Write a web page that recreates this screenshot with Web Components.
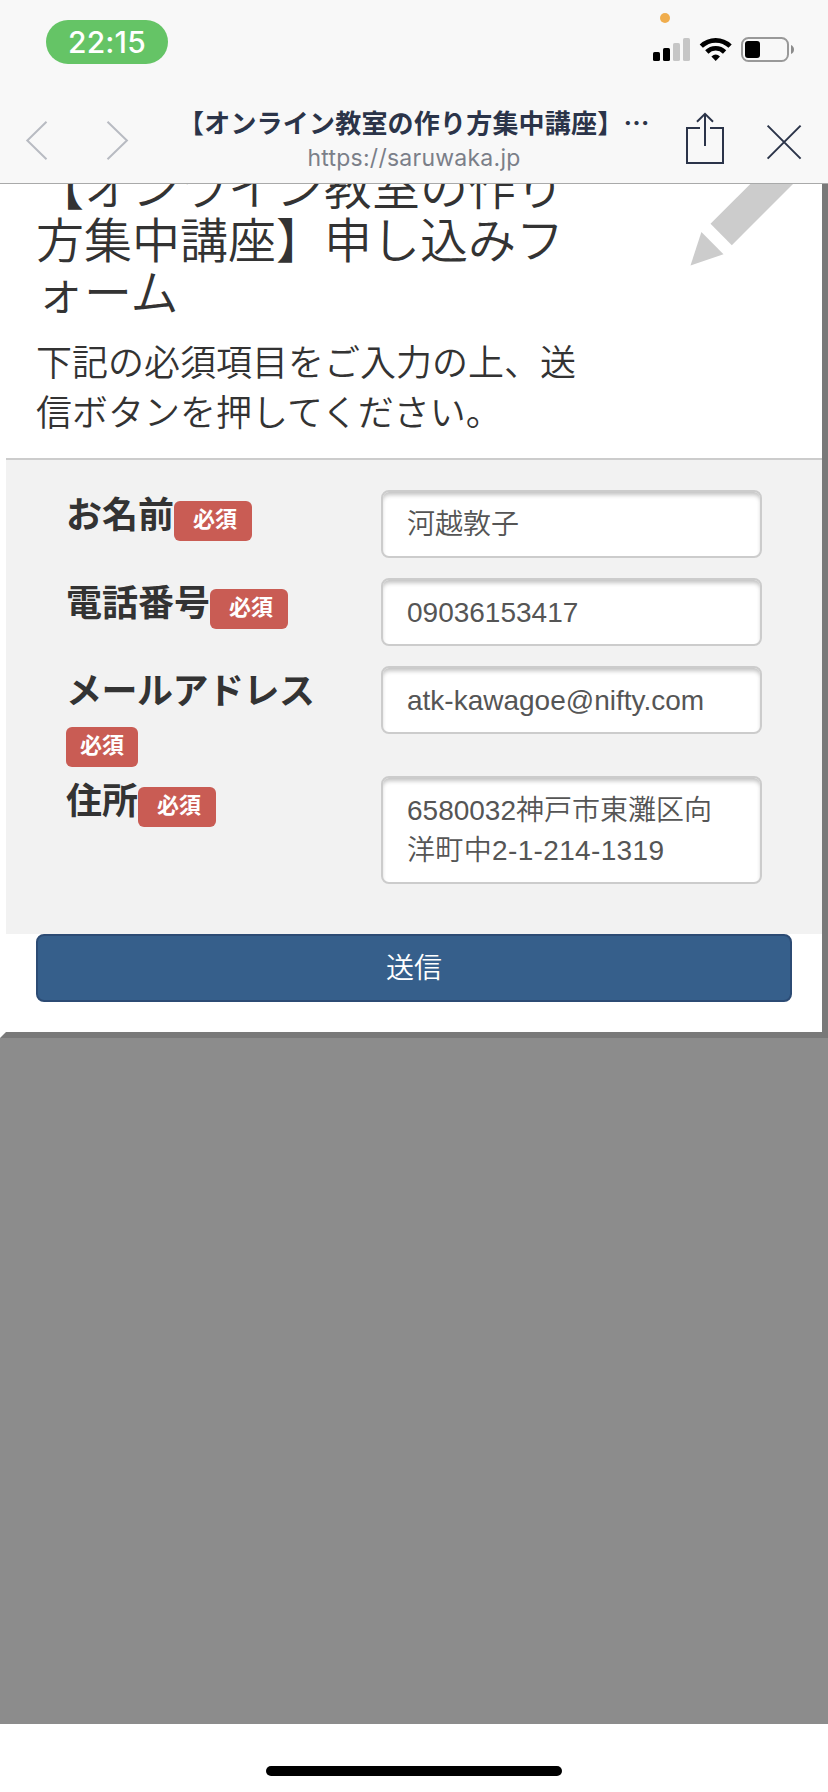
<!DOCTYPE html>
<html lang="ja">
<head>
<meta charset="utf-8">
<title>【オンライン教室の作り方集中講座】</title>
<style>
body {
    margin: 0;
    width: 828px;
    height: 1792px;
    overflow: hidden;
    background: #fff;
    font-family: "Liberation Sans", "Noto Sans CJK JP", sans-serif;
}
</style>
</head>
<body>
<form-screen></form-screen>

<script>
const define = (name, html, render) => {
    const template = document.createElement('template');
    template.innerHTML = html;

    customElements.define(name, class extends HTMLElement {
        constructor() {
            super();
            this.attachShadow({ mode: 'open' });
            this.shadowRoot.appendChild(template.content.cloneNode(true));
        }

        connectedCallback() {
            if (render) {
                render(this, this.shadowRoot);
            }
        }
    });
};

define('status-bar', `
<style>
:host {
    display: flex;
    justify-content: space-between;
    align-items: flex-start;
    height: 84px;
    padding-left: 46px;
    padding-right: 33px;
    box-sizing: border-box;
}
.time {
    margin-top: 20px;
    width: 122px;
    height: 44px;
    line-height: 45px;
    border-radius: 22px;
    background: #65c466;
    color: #fff;
    text-align: center;
    font-family: Inter, sans-serif;
    font-size: 30px;
    font-weight: 450;
    letter-spacing: 0.2px;
}
svg { display: block; }
</style>
<div class="time">22:15</div>
<svg width="143" height="70" viewBox="652 0 143 70">
    <circle cx="665" cy="18" r="5" fill="#f0ad4d"/>
    <rect x="653" y="52" width="7" height="9" rx="1.6"/>
    <rect x="663" y="48" width="7" height="13" rx="1.6"/>
    <rect x="673" y="43" width="7" height="18" rx="1.6" fill="#c6c6c6"/>
    <rect x="683" y="38" width="7" height="23" rx="1.6" fill="#c6c6c6"/>
    <g fill="none" stroke="#000" stroke-width="4.6">
        <path d="M701.3 46.2 A20.6 20.6 0 0 1 730.1 46.2"/>
        <path d="M706.8 52 A12.6 12.6 0 0 1 724.6 52"/>
    </g>
    <path d="M711.4 56.6 Q715.7 52.6 720 56.6 L715.7 61 Z"/>
    <rect x="742" y="38" width="46" height="23" rx="6.5" fill="none" stroke="#999" stroke-width="2"/>
    <rect x="745" y="41" width="15" height="17" rx="3"/>
    <path d="M791 45 Q794 46.5 794 49.5 T791 54 Z" fill="#8c8c8c"/>
</svg>
`);

define('nav-bar', `
<style>
:host {
    display: flex;
    align-items: flex-start;
    height: 99px;
    color: #2b3449;
}
svg {
    display: block;
    flex: none;
    fill: none;
    stroke: currentColor;
    stroke-width: 2;
}
.arrows { color: #b8bbc2; }
.titles {
    width: 488px;
    flex: none;
    text-align: center;
    white-space: nowrap;
    padding-top: 19px;
}
.title {
    font-size: 26px;
    line-height: 38px;
    font-weight: 700;
    font-family: "Noto Sans CJK JP", sans-serif;
    display: flex;
    padding-left: 8px;
    letter-spacing: 0.2px;
}
.url {
    margin-top: 2px;
    font-family: Inter, sans-serif;
    font-size: 23px;
    line-height: 30px;
    color: #7b7f89;
    letter-spacing: 0.25px;
}
</style>
<svg class="arrows" width="170" height="99" viewBox="0 84 170 99">
    <path d="M46.5 121.8 L27.3 140.5 L46.5 159.2"/>
    <path d="M107.5 121.8 L126.9 140.5 L107.5 159.2"/>
</svg>
<div class="titles">
    <div class="title"><slot name="title"></slot></div>
    <div class="url"><slot name="url"></slot></div>
</div>
<svg width="170" height="99" viewBox="658 84 170 99">
    <path d="M700 128 H687 V163 H723 V128 H710 M705 146 V114 M697 121.8 L705 113.8 L713 121.8"/>
    <path d="M767.6 125.6 L800.6 158.6 M800.6 125.6 L767.6 158.6"/>
</svg>
`);

define('form-heading', `
<style>
:host {
    display: flex;
    justify-content: space-between;
    height: 274px;
    padding-left: 30px;
    box-sizing: border-box;
    overflow: hidden;
    color: #333;
    font-family: "Noto Sans CJK JP", sans-serif;
    font-weight: 350;
}
.text {
    width: 545px;
    display: flex;
    flex-direction: column;
    justify-content: flex-end;
    gap: 18.5px;
    padding-bottom: 22.5px;
    white-space: nowrap;
}
.title {
    font-size: 48px;
    line-height: 52.8px;
}
.lead {
    font-size: 36px;
    line-height: 50.4px;
}
svg { display: block; }
</style>
<div class="text">
    <div class="title"><slot name="title"></slot></div>
    <div class="lead"><slot></slot></div>
</div>
<svg width="142" height="90" viewBox="680 184 142 90" fill="#ccc">
    <path d="M690.5 265.5 L701.4 232 L723.5 254.2 Z"/>
    <path d="M710.5 223.8 L731.8 245.2 L793.5 183.5 L750.8 183.5 Z"/>
</svg>
`);

define('required-badge', `
<style>
:host {
    display: block;
    height: 40px;
    line-height: 33px;
    padding: 0 15px 0 19px;
    box-sizing: border-box;
    border-radius: 6px;
    background: #c95c54;
    color: #fff;
    font-size: 22px;
    font-weight: 700;
    white-space: nowrap;
}
:host([wrapped]) { padding: 0 14px; }
</style>
<slot>必須</slot>
`);

define('form-row', `
<style>
:host {
    display: grid;
    grid-template-columns: 315px 381px;
    align-items: start;
    height: 88px;
}
:host([wrapped]) { height: 110px; }
.label {
    display: flex;
    flex-wrap: wrap;
    align-items: flex-start;
    font-family: "Noto Sans CJK JP", sans-serif;
    font-size: 36px;
    font-weight: 700;
    line-height: 45px;
    color: #333;
}
required-badge { margin-top: 11px; }
:host([wrapped]) .label span {
    width: 100%;
    letter-spacing: -0.5px;
}
:host([wrapped]) required-badge { margin-top: 16px; }
.field {
    min-height: 68px;
    box-sizing: border-box;
    padding: 13px 24px 11px;
    border: 2px solid #ccc;
    border-radius: 8px;
    background: #fff;
    box-shadow: inset 0 4px 4px -1px #c4c4c4;
    color: #555;
    font-size: 28px;
    font-weight: 350;
    line-height: 40px;
    white-space: nowrap;
}
.field ::slotted(span) { letter-spacing: 0.35px; }
</style>
<div class="label"><span></span><required-badge></required-badge></div>
<div class="field"><slot></slot></div>
`, (host, root) => {
    root.querySelector('span').textContent = host.getAttribute('label');
    root.querySelector('required-badge').toggleAttribute('wrapped', host.hasAttribute('wrapped'));
});

define('submit-button', `
<style>
:host {
    display: block;
    height: 68px;
    line-height: 65px;
    margin: 0 30px 30px;
    box-sizing: border-box;
    border: 2px solid #2c4b74;
    border-radius: 8px;
    background: #365f8b;
    color: #fff;
    font-size: 28px;
    font-weight: 350;
    text-align: center;
}
</style>
<slot></slot>
`);

define('form-card', `
<style>
:host {
    display: block;
    border: 6px solid;
    border-color: #fff #797979 #797979 #fff;
    border-top: none;
    background: #fff;
}
.rows {
    height: 476px;
    box-sizing: border-box;
    border-top: 2px solid #ccc;
    background: #f2f2f2;
    padding: 30px 60px 0;
}
</style>
<slot name="heading"></slot>
<div class="rows"><slot></slot></div>
<slot name="action"></slot>
`);

define('form-screen', `
<style>
:host {
    display: flex;
    flex-direction: column;
    width: 828px;
    height: 1792px;
}
header {
    height: 184px;
    flex: none;
    box-sizing: border-box;
    background: #f8f8f8;
    border-bottom: 1px solid #a9aaaa;
}
main {
    flex: 1;
    background: #8c8c8c;
}
footer {
    height: 68px;
    flex: none;
    background: #fff;
    display: flex;
    justify-content: center;
    align-items: flex-end;
    padding-bottom: 16px;
    box-sizing: border-box;
}
.home {
    width: 296px;
    height: 10px;
    border-radius: 5px;
    background: #000;
}
</style>
<header>
    <status-bar></status-bar>
    <nav-bar>
        <span slot="title">【オンライン教室の作り方集中講座】…</span>
        <span slot="url">https://saruwaka.jp</span>
    </nav-bar>
</header>
<main>
    <form-card>
        <form-heading slot="heading">
            <span slot="title">【オンライン教室の作り<br>方集中講座】申し込みフ<br>ォーム</span>
            下記の必須項目をご入力の上、送<br>信ボタンを押してください。
        </form-heading>
        <form-row label="お名前">河越敦子</form-row>
        <form-row label="電話番号">09036153417</form-row>
        <form-row label="メールアドレス" wrapped>atk-kawagoe@nifty.com</form-row>
        <form-row label="住所">6580032神戸市東灘区向<br><span>洋町中2-1-214-1319</span></form-row>
        <submit-button slot="action">送信</submit-button>
    </form-card>
</main>
<footer><div class="home"></div></footer>
`);
</script>
</body>
</html>
